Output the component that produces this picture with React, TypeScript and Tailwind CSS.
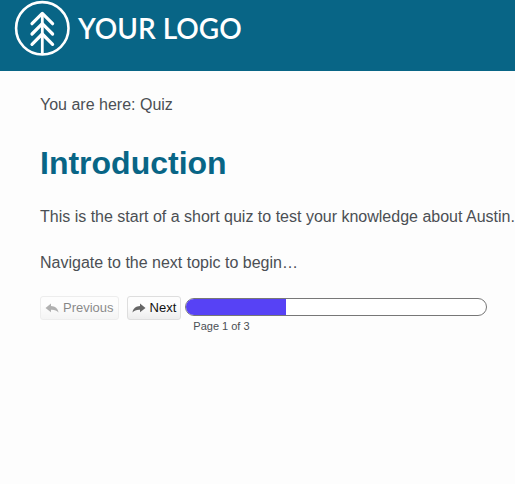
import React from "react";

function Logo() {
  return (
    <a href="#" className="flex items-center gap-2 text-white">
      <svg viewBox="0 0 56 56" className="size-14 shrink-0" fill="none" stroke="currentColor" strokeWidth="3.2" strokeLinecap="round" strokeLinejoin="round" aria-hidden="true">
        <circle cx="28.3" cy="28.3" r="26.2" strokeWidth="2.6" />
        <path d="M28.3 14v41" strokeLinecap="butt" strokeWidth="2.8" />
        <path d="M18 23.700 28.300 13.400 38.600 23.700M18 34 28.300 23.700 38.600 34M18 44.300 28.300 34 38.600 44.300" />
      </svg>
      <span className="font-['Lato',sans-serif] text-[28px] leading-8 font-semibold whitespace-nowrap">YOUR LOGO</span>
    </a>
  );
}

function Arrow({ flipped = false }: { flipped?: boolean }) {
  return (
    <svg viewBox="0 0 14 10" className={flipped ? "h-[10px] w-[14px] -scale-x-100" : "h-[10px] w-[14px]"} fill="#666" aria-hidden="true">
      <path d="M8 0.500 13.500 5 8 9.200V6.800C4.500 6.600 2.500 7.500 0.500 9.500 1 5.500 4 3.200 8 3.100Z" />
    </svg>
  );
}

function NavButton({ label, back = false, disabled = false }: { label: string; back?: boolean; disabled?: boolean }) {
  return (
    <button
      type="button"
      disabled={disabled}
      className="flex h-6 items-center gap-1 rounded-[3px] border border-[#dedede] bg-linear-to-b from-[#fdfdfd] from-40% to-[#ededed] px-1 text-[13px] leading-4 text-[#111] disabled:opacity-50"
    >
      <Arrow flipped={back} />
      {label}
    </button>
  );
}

export default function App() {
  const page = 1;
  const total = 3;
  return (
    <div className="min-h-screen bg-[#fdfdfd] font-['Liberation_Sans',Arial,sans-serif] text-base leading-6 text-[#4b4f54]">
      <header className="bg-[#086586] px-3.5 pb-[15px]">
        <Logo />
      </header>
      <main className="pt-[22px] pl-10">
        <nav aria-label="Breadcrumb">You are here: Quiz</nav>
        <h1 className="mt-[26px] text-[32px] leading-10 font-bold text-[#086586]">Introduction</h1>
        <p className="mt-[22px]">This is the start of a short quiz to test your knowledge about Austin.</p>
        <p className="mt-[22px]">Navigate to the next topic to begin…</p>
        <div className="mt-[21px] flex items-start gap-1">
          <div className="flex gap-2">
            <NavButton label="Previous" back disabled />
            <NavButton label="Next" />
          </div>
          <div className="mr-7 max-w-[302px] grow pt-0.5">
            <div
              role="progressbar"
              aria-label="Quiz progress"
              aria-valuemin={0}
              aria-valuemax={total}
              aria-valuenow={page}
              className="h-[18px] overflow-hidden rounded-full border border-[#777] bg-white"
            >
              <div className="h-full bg-[#5742f5]" style={{ width: `${(page / total) * 100}%` }} />
            </div>
            <p className="mt-0.5 pl-2 text-[11px] leading-4">Page {page} of {total}</p>
          </div>
        </div>
      </main>
    </div>
  );
}
